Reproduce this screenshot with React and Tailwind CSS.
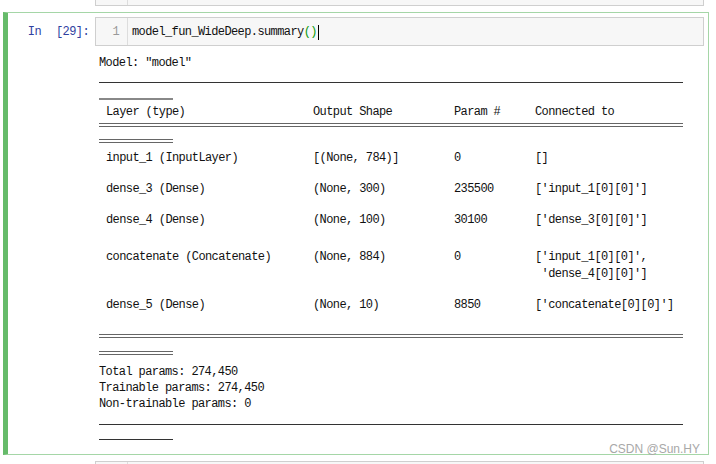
import React from "react";

const mono = "font-['Liberation_Mono','DejaVu_Sans_Mono',monospace] text-[12px] tracking-[-0.6px]";

function Row({ a, b, c, d, d2, pb }) {
  return (
    <div className={`grid grid-cols-[207px_141px_81px_1fr] pl-[7px] leading-[17px] ${pb}`}>
      <div className="whitespace-pre">{a}</div>
      <div className="whitespace-pre">{b}</div>
      <div className="whitespace-pre">{c}</div>
      <div className="whitespace-pre">
        {d}
        {d2 ? <div>{d2}</div> : null}
      </div>
    </div>
  );
}

export default function App() {
  return (
    <div className={`w-[716px] h-[464px] bg-white overflow-hidden relative text-[#111] ${mono}`}>
      {/* previous cell input (bottom portion) */}
      <div className="ml-[95px] w-[609px] h-[6px] bg-[#f7f7f7] border-x border-b border-[#cfcfcf] flex">
        <div className="w-[32px] border-r border-[#dddddd]" />
      </div>

      {/* selected cell */}
      <div className="relative mt-[6px] ml-[3px] w-[706px] h-[443px] border border-[#a5d6a7] border-l-[5px] border-l-[#66bb6a] pt-[4px] pr-[4px]">
        <div className="flex">
          <div className="w-[87px] flex justify-end gap-[15px] pr-[6px] pt-[7px] leading-[17px] text-[#303f9f]">
            <span>In</span>
            <span>[29]:</span>
          </div>
          <div className="flex-1 h-[29px] bg-[#f7f7f7] border border-[#cfcfcf] flex">
            <div className="w-[32px] border-r border-[#dddddd] text-right pr-[8px] pt-[6px] leading-[17px] text-[#999]">
              1
            </div>
            <div className="pl-[4px] pt-[6px] leading-[17px] flex items-start">
              <span>model_fun_WideDeep.summary</span>
              <span className="text-[#0a9a0a]">()</span>
              <span className="w-[1px] h-[15px] bg-black mt-[1px] ml-[1px]" />
            </div>
          </div>
        </div>

        {/* output */}
        <div className="ml-[91px] flex flex-col">
          <div className="mt-[9px] h-[17px] leading-[17px] whitespace-pre">Model: "model"</div>
          <div className="mt-[10px] w-[584px] h-[1px] bg-[#333]" />
          <div className="mt-[15px] w-[74px] h-[2px] bg-[#888]" />
          <div className="mt-[4px]">
            <Row a="Layer (type)" b="Output Shape" c="Param #" d="Connected to" pb="" />
          </div>
          <div className="mt-[2px] w-[584px] h-[4px] border-y border-[#666]" />
          <div className="mt-[12px] w-[74px] h-[4px] border-y border-[#666]" />
          <div className="mt-[7px] flex flex-col">
            <Row a="input_1 (InputLayer)" b="[(None, 784)]" c="0" d="[]" pb="pb-[14px]" />
            <Row a="dense_3 (Dense)" b="(None, 300)" c="235500" d="['input_1[0][0]']" pb="pb-[14px]" />
            <Row a="dense_4 (Dense)" b="(None, 100)" c="30100" d="['dense_3[0][0]']" pb="pb-[20px]" />
            <Row
              a="concatenate (Concatenate)"
              b="(None, 884)"
              c="0"
              d="['input_1[0][0]',"
              d2=" 'dense_4[0][0]']"
              pb="pb-[14px]"
            />
            <Row a="dense_5 (Dense)" b="(None, 10)" c="8850" d="['concatenate[0][0]']" pb="" />
          </div>
          <div className="mt-[20px] w-[584px] h-[4px] border-y border-[#666]" />
          <div className="mt-[13px] w-[74px] h-[4px] border-y border-[#666]" />
          <div className="mt-[9px] leading-[16px] whitespace-pre">
            <div>Total params: 274,450</div>
            <div>Trainable params: 274,450</div>
            <div>Non-trainable params: 0</div>
          </div>
          <div className="mt-[12px] w-[584px] h-[1px] bg-[#333]" />
          <div className="mt-[14px] w-[74px] h-[1px] bg-[#333]" />
        </div>

        <div className="absolute right-[8px] bottom-[-2px] font-['Liberation_Sans',sans-serif] text-[12px] tracking-normal leading-[14px] text-[#a8a8a8]">
          CSDN @Sun.HY
        </div>
      </div>

      {/* next cell input (top portion) */}
      <div className="mt-[6px] ml-[95px] w-[609px] h-[10px] bg-[#f7f7f7] border-x border-t border-[#cfcfcf] flex">
        <div className="w-[32px] border-r border-[#dddddd]" />
      </div>
    </div>
  );
}
